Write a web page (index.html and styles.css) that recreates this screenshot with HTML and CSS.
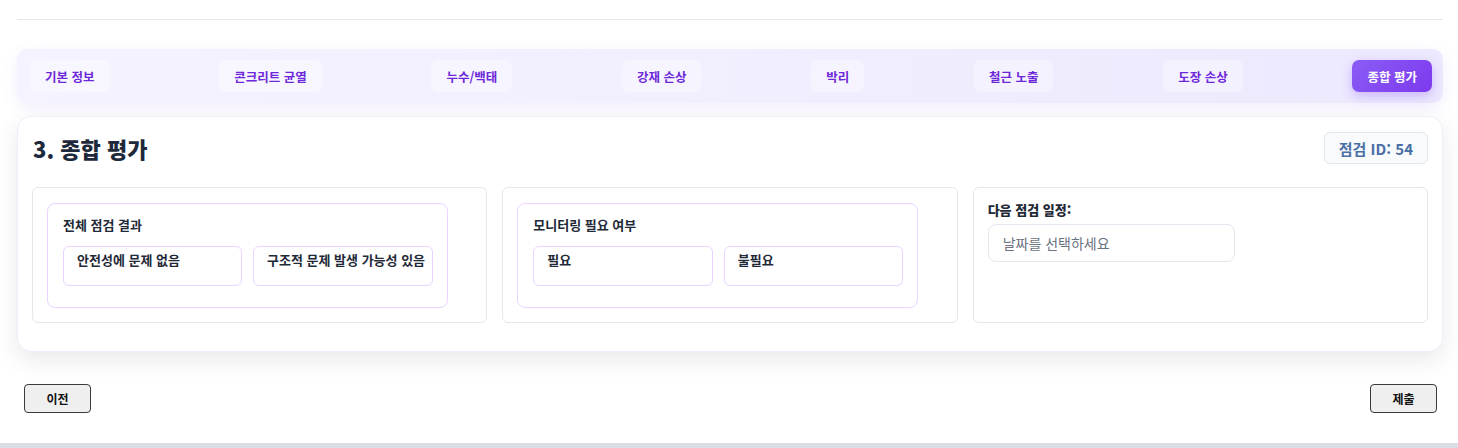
FILE: index.html
```html
<!DOCTYPE html>
<html lang="ko">
<head>
<meta charset="utf-8">
<title>종합 평가</title>
<link rel="stylesheet" href="styles.css">
</head>
<body>
<div class="page">
  <div class="topline"></div>
  <nav class="tabs">
    <button class="tab">기본 정보</button>
    <button class="tab">콘크리트 균열</button>
    <button class="tab">누수/백태</button>
    <button class="tab">강재 손상</button>
    <button class="tab">박리</button>
    <button class="tab">철근 노출</button>
    <button class="tab">도장 손상</button>
    <button class="tab active">종합 평가</button>
  </nav>
  <section class="card">
    <div class="card-head">
      <h2 class="title">3. 종합 평가</h2>
      <span class="badge">점검 ID: 54</span>
    </div>
    <div class="grid">
      <div class="cell">
        <div class="group">
          <div class="group-title">전체 점검 결과</div>
          <div class="options">
            <label class="option">안전성에 문제 없음</label>
            <label class="option">구조적 문제 발생 가능성 있음</label>
          </div>
        </div>
      </div>
      <div class="cell">
        <div class="group">
          <div class="group-title">모니터링 필요 여부</div>
          <div class="options">
            <label class="option">필요</label>
            <label class="option">불필요</label>
          </div>
        </div>
      </div>
      <div class="cell">
        <div class="field-label">다음 점검 일정:</div>
        <input class="date-input" type="text" placeholder="날짜를 선택하세요">
      </div>
    </div>
  </section>
  <div class="actions">
    <button class="btn">이전</button>
    <button class="btn">제출</button>
  </div>
</div>
<div class="strip"></div>
</body>
</html>
```
FILE: styles.css
```css
* { box-sizing: border-box; }
html, body { margin: 0; padding: 0; background: #ffffff; }
body {
  font-family: "Noto Sans CJK KR", "Noto Sans", sans-serif;
  color: #1f2937;
  height: 448px;
  overflow: hidden;
  position: relative;
}
.page {
  padding: 0 15px 0 17px;
}
.topline {
  margin-top: 19px;
  height: 1px;
  background: #e5e7eb;
}
.tabs {
  margin-top: 29px;
  height: 54px;
  display: flex;
  align-items: center;
  justify-content: space-between;
  padding: 0 11px 0 13px;
  border-radius: 10px;
  background: linear-gradient(90deg, #f5f3ff 0%, #ede9fe 100%);
  box-shadow: 0 5px 16px rgba(139, 92, 246, 0.1);
}
.tab {
  height: 32px;
  padding: 0 15px;
  border: none;
  border-radius: 7px;
  background: rgba(255, 255, 255, 0.35);
  color: #6d28d9;
  font-family: inherit;
  font-size: 12.5px;
  font-weight: 700;
  cursor: pointer;
}
.tab.active {
  background: linear-gradient(135deg, #8b5cf6 0%, #7c3aed 100%);
  color: #ffffff;
  box-shadow: 0 4px 12px rgba(124, 58, 237, 0.3);
}
.card {
  margin-top: 13px;
  background: #ffffff;
  border: 1px solid #f0eefb;
  border-radius: 14px;
  padding: 14px 14px 28px;
  box-shadow: 0 8px 24px rgba(0, 0, 0, 0.09);
}
.card-head {
  display: flex;
  align-items: center;
  justify-content: space-between;
  height: 34px;
  margin-bottom: 22px;
}
.title {
  margin: 0 0 0 1px;
  font-size: 22px;
  font-weight: 900;
  color: #1e293b;
  letter-spacing: 0;
}
.badge {
  height: 32px;
  display: flex;
  align-items: center;
  padding: 0 14px;
  background: #f8fafc;
  border: 1px solid #e2e8f0;
  border-radius: 6px;
  color: #4a6fa5;
  font-size: 15px;
  font-weight: 700;
}
.grid {
  display: grid;
  grid-template-columns: repeat(3, 1fr);
  gap: 15px;
}
.cell {
  border: 1px solid #e5e7eb;
  border-radius: 6px;
  padding: 15px 14px 14px;
  min-height: 136px;
}
.group {
  width: 401px;
  border: 1px solid #e9d5ff;
  border-radius: 8px;
  padding: 12px 14px 21px 15px;
}
.group-title {
  font-size: 13px;
  font-weight: 700;
  color: #1f2937;
  line-height: 18px;
  margin-bottom: 12px;
}
.options {
  display: flex;
  gap: 11px;
}
.option {
  width: 180px;
  height: 40px;
  border: 1px solid #e9d5ff;
  border-radius: 6px;
  padding: 4px 13px 0;
  font-size: 13px;
  font-weight: 700;
  line-height: 18px;
  color: #1f2937;
  white-space: nowrap;
}
.field-label {
  font-size: 13px;
  font-weight: 900;
  color: #1f2937;
  line-height: 14px;
  margin-bottom: 7px;
}
.date-input {
  display: block;
  width: 247px;
  height: 38px;
  border: 1px solid #e2e8f0;
  border-radius: 8px;
  padding: 0 14px;
  font-family: inherit;
  font-size: 14px;
  color: #1f2937;
  background: #ffffff;
  outline: none;
}
.date-input::placeholder { color: #6b7280; }
.actions {
  margin-top: 32px;
  display: flex;
  justify-content: space-between;
  padding: 0 6px 0 7px;
}
.btn {
  width: 67px;
  height: 29px;
  background: #efefef;
  border: 1px solid #3a3a3a;
  border-radius: 4px;
  font-family: inherit;
  font-size: 12px;
  font-weight: 700;
  color: #111111;
}
.strip {
  position: absolute;
  left: 0;
  right: 0;
  bottom: 0;
  height: 5px;
  background: #dadde3;
}
```
